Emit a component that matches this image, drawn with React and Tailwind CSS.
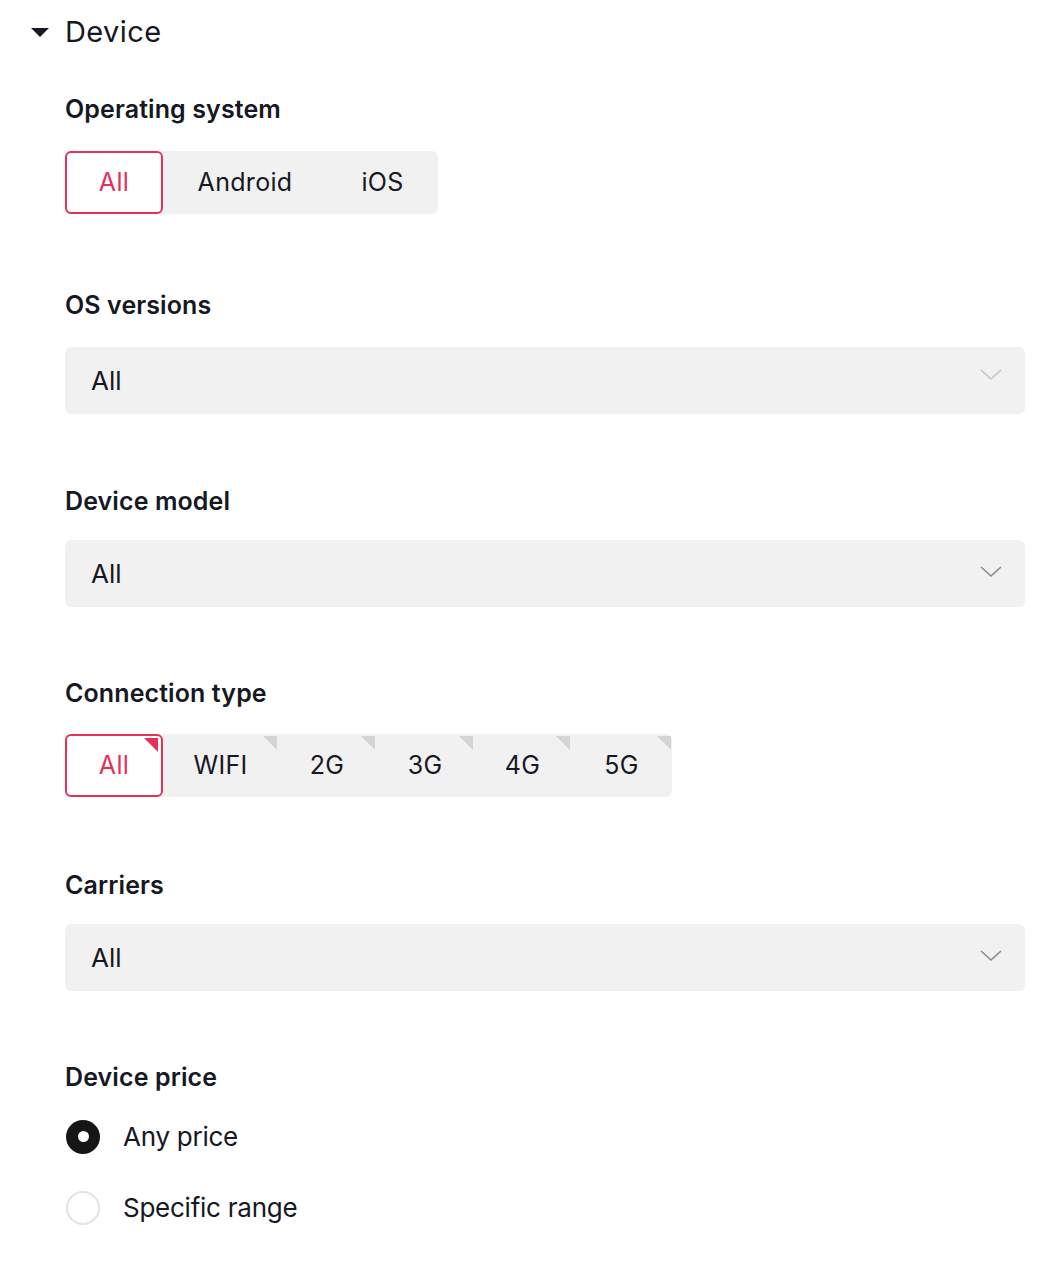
import React, { useState } from "react";

const font = { fontFamily: '"Inter", "Open Sans", sans-serif' };

function Chevron({ faded }) {
  return (
    <svg
      width="24"
      height="14"
      viewBox="0 0 24 14"
      fill="none"
      className={faded ? "-mt-[12px]" : "-mt-[3px]"}
    >
      <path
        d="M2 2 L12 11 L22 2"
        stroke={faded ? "#c4c4c4" : "#8a8a8a"}
        strokeWidth="1.6"
      />
    </svg>
  );
}

function Select({ value, faded }) {
  return (
    <div className="flex h-[67px] w-[960px] items-center justify-between rounded-[6px] bg-[#f1f1f1] pl-[26px] pr-[22px]">
      <span className="text-[26px] text-[#161823]">{value}</span>
      <Chevron faded={faded} />
    </div>
  );
}

function Segmented({ options, widths, selected, onSelect, corner }) {
  return (
    <div className="flex h-[63px] rounded-[6px] bg-[#f1f1f2]">
      {options.map((opt, i) => {
        const active = i === selected;
        return (
          <button
            key={opt}
            type="button"
            onClick={() => onSelect(i)}
            style={{ width: widths[i] }}
            className={`relative flex h-full items-center justify-center text-[25px] tracking-[0.3px] ${
              active
                ? "rounded-[6px] border-2 border-[#e5305a] bg-white text-[#e5305a]"
                : "text-[#161823]"
            }`}
          >
            {opt}
            {corner && (
              <span
                className={`absolute h-0 w-0 border-l-[14px] border-t-[14px] border-l-transparent ${
                  active
                    ? "right-[3px] top-[2px] border-t-[#e5305a]"
                    : "right-[1px] top-[2px] border-t-[#d4d4d4]"
                }`}
              />
            )}
          </button>
        );
      })}
    </div>
  );
}

function Label({ children, className = "" }) {
  return (
    <div
      className={`text-[25px] font-semibold leading-[32px] tracking-[0.1px] text-[#161823] ${className}`}
    >
      {children}
    </div>
  );
}

function Radio({ checked, label, onClick }) {
  return (
    <button type="button" onClick={onClick} className="flex items-center gap-[23px]">
      {checked ? (
        <span className="flex h-[34px] w-[34px] items-center justify-center rounded-full bg-[#161616]">
          <span className="h-[11px] w-[11px] rounded-full bg-white" />
        </span>
      ) : (
        <span className="h-[34px] w-[34px] rounded-full border-2 border-[#e3e3e4] bg-white" />
      )}
      <span className="text-[26px] tracking-[-0.25px] text-[#161823]">{label}</span>
    </button>
  );
}

export default function App() {
  const [os, setOs] = useState(0);
  const [conn, setConn] = useState(0);
  const [price, setPrice] = useState(0);

  return (
    <div className="min-h-[1262px] w-[1064px] bg-white" style={font}>
      <div className="flex h-[64px] items-center pl-[31px]">
        <span className="h-0 w-0 border-x-[9px] border-t-[9px] border-x-transparent border-t-[#161823]" />
        <span className="ml-[16px] text-[29px] tracking-[0.4px] text-[#161823]">Device</span>
      </div>

      <div className="pl-[65px]">
        <Label className="mt-[29px]">Operating system</Label>
        <div className="mt-[26px] flex">
          <Segmented
            options={["All", "Android", "iOS"]}
            widths={[98, 164, 111]}
            selected={os}
            onSelect={setOs}
          />
        </div>

        <Label className="mt-[75px]">OS versions</Label>
        <div className="mt-[26px]">
          <Select value="All" faded />
        </div>

        <Label className="mt-[71px]">Device model</Label>
        <div className="mt-[23px]">
          <Select value="All" />
        </div>

        <Label className="mt-[70px]">Connection type</Label>
        <div className="mt-[25px] flex">
          <Segmented
            options={["All", "WIFI", "2G", "3G", "4G", "5G"]}
            widths={[98, 115, 98, 98, 97, 101]}
            selected={conn}
            onSelect={setConn}
            corner
          />
        </div>

        <Label className="mt-[72px]">Carriers</Label>
        <div className="mt-[23px]">
          <Select value="All" />
        </div>

        <Label className="mt-[70px]">Device price</Label>
        <div className="mt-[24px] flex flex-col items-start gap-[32px] pl-[1px]">
          <Radio checked={price === 0} label="Any price" onClick={() => setPrice(0)} />
          <Radio checked={price === 1} label="Specific range" onClick={() => setPrice(1)} />
        </div>
      </div>
    </div>
  );
}
